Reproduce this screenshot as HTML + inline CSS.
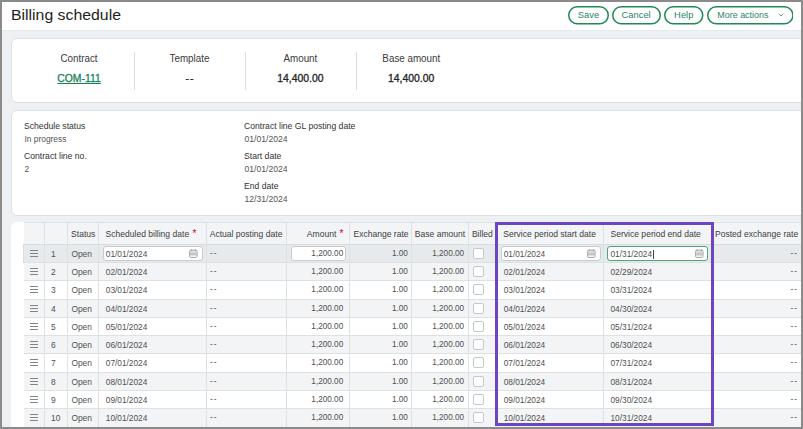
<!DOCTYPE html><html><head><meta charset="utf-8"><style>
*{box-sizing:border-box;margin:0;padding:0}
html,body{width:803px;height:429px;overflow:hidden;background:#edf1f3;font-family:"Liberation Sans",sans-serif;position:relative}
.a{position:absolute;white-space:nowrap}
.btn{position:absolute;top:6px;height:18.5px;border:1px solid #1c7f4e;box-shadow:inset 0 0 0 0.6px #1c7f4e;border-radius:10px;background:#fff}
.card{position:absolute;background:#fff;border:1px solid #dce1e4;border-radius:6px}
.dv{position:absolute;width:1px;background:#d9dde0}
.gv{position:absolute;width:1px;background:#dde2e5}
.inp{position:absolute;background:#fff;border:1px solid #c6ccd0;border-radius:3px}
</style></head><body>
<div class="a" style="left:0;top:0;width:803px;height:30px;background:#fff"></div>
<div class="a" style="left:0;top:30px;width:803px;height:1px;background:#e5eaec"></div>
<div class="a " style="top:8.30px;font-size:15px;line-height:14px;left:11.3px;color:#1e1e1e;transform:scaleX(1.055);transform-origin:0 0">Billing schedule</div>
<svg class="a" style="left:568px;top:6px" width="41.00" height="18.5" viewBox="0 0 41.00 18.5"><rect x="0.75" y="0.75" width="39.50" height="17" rx="8.5" fill="#fff" stroke="#1e8a55" stroke-width="1.5"/></svg>
<div class="a " style="top:8.34px;font-size:9.4px;line-height:14px;left:568px;width:41px;text-align:center;color:#2a8566;">Save</div>
<svg class="a" style="left:611.6px;top:6px" width="49.00" height="18.5" viewBox="0 0 49.00 18.5"><rect x="0.75" y="0.75" width="47.50" height="17" rx="8.5" fill="#fff" stroke="#1e8a55" stroke-width="1.5"/></svg>
<div class="a " style="top:8.34px;font-size:9.4px;line-height:14px;left:611.6px;width:49.0px;text-align:center;color:#2a8566;">Cancel</div>
<svg class="a" style="left:664px;top:6px" width="39.50" height="18.5" viewBox="0 0 39.50 18.5"><rect x="0.75" y="0.75" width="38.00" height="17" rx="8.5" fill="#fff" stroke="#1e8a55" stroke-width="1.5"/></svg>
<div class="a " style="top:8.34px;font-size:9.4px;line-height:14px;left:664px;width:39.5px;text-align:center;color:#2a8566;">Help</div>
<svg class="a" style="left:706.8px;top:6px" width="86.70" height="18.5" viewBox="0 0 86.70 18.5"><rect x="0.75" y="0.75" width="85.20" height="17" rx="8.5" fill="#fff" stroke="#1e8a55" stroke-width="1.5"/></svg>
<div class="a " style="top:7.90px;font-size:8.95px;line-height:14px;left:717.3px;color:#2a8566;">More actions</div>
<svg class="a" style="left:778px;top:13px" width="6" height="4" viewBox="0 0 6 4"><path d="M0.7 0.7 L3 3 L5.3 0.7" fill="none" stroke="#3b8a70" stroke-width="0.8"/></svg>
<div class="card" style="left:11px;top:38px;width:820px;height:64.5px"></div>
<div class="a " style="top:51.36px;font-size:10.5px;line-height:14px;left:24px;width:110px;text-align:center;color:#3a3a3a;transform:scaleX(0.935)">Contract</div>
<div class="a " style="top:72.40px;font-size:10.4px;line-height:14px;left:24px;width:110px;text-align:center;color:#1a8459;-webkit-text-stroke:0.3px #1a8459;text-decoration:underline;text-underline-offset:1.0px;text-decoration-thickness:1px">COM-111</div>
<div class="a " style="top:51.36px;font-size:10.5px;line-height:14px;left:134px;width:111px;text-align:center;color:#3a3a3a;transform:scaleX(0.935)">Template</div>
<div class="a " style="top:72.40px;font-size:10.4px;line-height:14px;left:134px;width:111px;text-align:center;color:#222;-webkit-text-stroke:0.3px #222;letter-spacing:0.9px;padding-left:0.9px">--</div>
<div class="a " style="top:51.36px;font-size:10.5px;line-height:14px;left:245px;width:110.80000000000001px;text-align:center;color:#3a3a3a;transform:scaleX(0.935)">Amount</div>
<div class="a " style="top:72.40px;font-size:10.4px;line-height:14px;left:245px;width:110.80000000000001px;text-align:center;color:#222;-webkit-text-stroke:0.3px #222">14,400.00</div>
<div class="a " style="top:51.36px;font-size:10.5px;line-height:14px;left:355.8px;width:110.59999999999997px;text-align:center;color:#3a3a3a;transform:scaleX(0.935)">Base amount</div>
<div class="a " style="top:72.40px;font-size:10.4px;line-height:14px;left:355.8px;width:110.59999999999997px;text-align:center;color:#222;-webkit-text-stroke:0.3px #222">14,400.00</div>
<div class="dv" style="left:134px;top:51.6px;height:38.4px"></div>
<div class="dv" style="left:245px;top:51.6px;height:38.4px"></div>
<div class="dv" style="left:355.8px;top:51.6px;height:38.4px"></div>
<div class="card" style="left:11px;top:110px;width:820px;height:105.5px"></div>
<div class="a " style="top:119.00px;font-size:8.65px;line-height:14px;left:24px;color:#333;">Schedule status</div>
<div class="a " style="top:132.39px;font-size:8.4px;line-height:14px;left:24.5px;color:#555;">In progress</div>
<div class="a " style="top:149.00px;font-size:8.65px;line-height:14px;left:24px;color:#333;">Contract line no.</div>
<div class="a " style="top:162.39px;font-size:8.4px;line-height:14px;left:24.5px;color:#555;">2</div>
<div class="a " style="top:119.00px;font-size:8.65px;line-height:14px;left:244px;color:#333;">Contract line GL posting date</div>
<div class="a " style="top:132.32px;font-size:8.6px;line-height:14px;left:244.5px;color:#555;">01/01/2024</div>
<div class="a " style="top:149.00px;font-size:8.65px;line-height:14px;left:244px;color:#333;">Start date</div>
<div class="a " style="top:162.32px;font-size:8.6px;line-height:14px;left:244.5px;color:#555;">01/01/2024</div>
<div class="a " style="top:179.00px;font-size:8.65px;line-height:14px;left:244px;color:#333;">End date</div>
<div class="a " style="top:192.32px;font-size:8.6px;line-height:14px;left:244.5px;color:#555;">12/31/2024</div>
<div class="a" style="left:11px;top:222px;width:820px;height:260px;background:#fff;border-radius:6px"></div>
<div class="a" style="left:24px;top:222px;width:790px;height:22px;background:#f2f4f6;border-top:1px solid #dde2e5"></div>
<div class="a" style="left:23px;top:244px;width:791px;height:19px;background:#e6eaed;border-top:1px solid #d6dcdf;border-left:1px solid #d6dcdf"></div>
<div class="a" style="left:24px;top:262px;width:790px;height:19px;background:#f2f4f5;border-top:1px solid #dce1e4"></div>
<div class="a" style="left:24px;top:280px;width:790px;height:20px;background:#ffffff;border-top:1px solid #dce1e4"></div>
<div class="a" style="left:24px;top:299px;width:790px;height:19px;background:#f2f4f5;border-top:1px solid #dce1e4"></div>
<div class="a" style="left:24px;top:317px;width:790px;height:19px;background:#ffffff;border-top:1px solid #dce1e4"></div>
<div class="a" style="left:24px;top:335px;width:790px;height:19px;background:#f2f4f5;border-top:1px solid #dce1e4"></div>
<div class="a" style="left:24px;top:353px;width:790px;height:20px;background:#ffffff;border-top:1px solid #dce1e4"></div>
<div class="a" style="left:24px;top:372px;width:790px;height:19px;background:#f2f4f5;border-top:1px solid #dce1e4"></div>
<div class="a" style="left:24px;top:390px;width:790px;height:19px;background:#ffffff;border-top:1px solid #dce1e4"></div>
<div class="a" style="left:24px;top:408px;width:790px;height:19px;background:#f2f4f5;border-top:1px solid #dce1e4"></div>
<div class="gv" style="left:44px;top:222px;height:210px"></div>
<div class="gv" style="left:67px;top:222px;height:210px"></div>
<div class="gv" style="left:98px;top:222px;height:210px"></div>
<div class="gv" style="left:206px;top:222px;height:210px"></div>
<div class="gv" style="left:286px;top:222px;height:210px"></div>
<div class="gv" style="left:349px;top:222px;height:210px"></div>
<div class="gv" style="left:411px;top:222px;height:210px"></div>
<div class="gv" style="left:468px;top:222px;height:210px"></div>
<div class="gv" style="left:496px;top:222px;height:210px"></div>
<div class="gv" style="left:603px;top:222px;height:210px"></div>
<div class="gv" style="left:712px;top:222px;height:210px"></div>
<div class="a " style="top:227.04px;font-size:8.55px;line-height:14px;left:71.1px;color:#404040;">Status</div>
<div class="a " style="top:227.04px;font-size:8.55px;line-height:14px;left:105.5px;color:#404040;">Scheduled billing date</div>
<div class="a " style="top:227.04px;font-size:8.55px;line-height:14px;left:209.7px;color:#404040;">Actual posting date</div>
<div class="a " style="top:227.04px;font-size:8.55px;line-height:14px;right:466.7px;color:#404040;">Amount</div>
<div class="a " style="top:227.04px;font-size:8.55px;line-height:14px;right:394.4px;color:#404040;">Exchange rate</div>
<div class="a " style="top:227.04px;font-size:8.55px;line-height:14px;right:337.8px;color:#404040;">Base amount</div>
<div class="a " style="top:227.04px;font-size:8.55px;line-height:14px;left:471.9px;color:#404040;">Billed</div>
<div class="a " style="top:227.04px;font-size:8.55px;line-height:14px;left:503.3px;color:#404040;">Service period start date</div>
<div class="a " style="top:227.04px;font-size:8.55px;line-height:14px;left:610.5px;color:#404040;">Service period end date</div>
<div class="a " style="top:227.04px;font-size:8.55px;line-height:14px;left:715px;color:#404040;">Posted exchange rate</div>
<div class="a " style="top:227.13px;font-size:10px;line-height:14px;left:192.6px;color:#d0021b;">*</div>
<div class="a " style="top:227.13px;font-size:10px;line-height:14px;left:339.5px;color:#d0021b;">*</div>
<div class="a" style="left:30px;top:250.00px;width:8px;height:1px;background:#858585"></div>
<div class="a" style="left:30px;top:252.90px;width:8px;height:1px;background:#858585"></div>
<div class="a" style="left:30px;top:255.80px;width:8px;height:1px;background:#858585"></div>
<div class="a " style="top:246.69px;font-size:8.4px;line-height:14px;left:51px;color:#505050;">1</div>
<div class="a " style="top:246.69px;font-size:8.4px;line-height:14px;left:71.4px;color:#505050;">Open</div>
<div class="inp" style="left:102.5px;top:246.4px;width:100px;height:14.5px"></div>
<div class="inp" style="left:290.6px;top:246.4px;width:55.5px;height:14.5px"></div>
<div class="inp" style="left:500.5px;top:246.4px;width:100px;height:14.5px"></div>
<div class="inp" style="left:607.3px;top:246.4px;width:100.4px;height:14.6px;border-color:#4ea47b"></div>
<svg class="a" style="left:189.3px;top:249.3px" width="9" height="9" viewBox="0 0 9 9"><rect x="0.5" y="1.1" width="7.6" height="7.4" rx="1.6" fill="#e0e0e0" stroke="#a0a0a0" stroke-width="0.9"/><rect x="1.2" y="3.6" width="6.2" height="3" fill="#c6c6c6"/><rect x="1.2" y="6.7" width="6.2" height="1.1" fill="#fbfbfb"/><rect x="1.7" y="0.4" width="0.8" height="1.3" fill="#8a8a8a"/><rect x="6.1" y="0.4" width="0.8" height="1.3" fill="#8a8a8a"/></svg>
<svg class="a" style="left:587.0px;top:249.3px" width="9" height="9" viewBox="0 0 9 9"><rect x="0.5" y="1.1" width="7.6" height="7.4" rx="1.6" fill="#e0e0e0" stroke="#a0a0a0" stroke-width="0.9"/><rect x="1.2" y="3.6" width="6.2" height="3" fill="#c6c6c6"/><rect x="1.2" y="6.7" width="6.2" height="1.1" fill="#fbfbfb"/><rect x="1.7" y="0.4" width="0.8" height="1.3" fill="#8a8a8a"/><rect x="6.1" y="0.4" width="0.8" height="1.3" fill="#8a8a8a"/></svg>
<svg class="a" style="left:694.8px;top:249.3px" width="9" height="9" viewBox="0 0 9 9"><rect x="0.5" y="1.1" width="7.6" height="7.4" rx="1.6" fill="#e0e0e0" stroke="#a0a0a0" stroke-width="0.9"/><rect x="1.2" y="3.6" width="6.2" height="3" fill="#c6c6c6"/><rect x="1.2" y="6.7" width="6.2" height="1.1" fill="#fbfbfb"/><rect x="1.7" y="0.4" width="0.8" height="1.3" fill="#8a8a8a"/><rect x="6.1" y="0.4" width="0.8" height="1.3" fill="#8a8a8a"/></svg>
<div class="a " style="top:246.72px;font-size:8.3px;line-height:14px;left:105.8px;color:#505050;">01/01/2024</div>
<div class="a " style="top:245.89px;font-size:8.4px;line-height:14px;left:210.1px;color:#505050;letter-spacing:0.9px">--</div>
<div class="a " style="top:246.76px;font-size:8.2px;line-height:14px;right:459.8px;color:#505050;">1,200.00</div>
<div class="a " style="top:246.76px;font-size:8.2px;line-height:14px;right:395.2px;color:#505050;">1.00</div>
<div class="a " style="top:246.76px;font-size:8.2px;line-height:14px;right:338.9px;color:#505050;">1,200.00</div>
<div class="a" style="left:473.4px;top:247.6px;width:11px;height:11px;background:#fff;border:1px solid #c3c9cd;border-radius:2px"></div>
<div class="a " style="top:246.72px;font-size:8.3px;line-height:14px;left:503.7px;color:#505050;">01/01/2024</div>
<div class="a " style="top:246.72px;font-size:8.3px;line-height:14px;left:610.5px;color:#505050;">01/31/2024</div>
<div class="a " style="top:245.89px;font-size:8.4px;line-height:14px;right:5.100000000000023px;color:#505050;letter-spacing:0.9px">--</div>
<div class="a" style="left:30px;top:268.00px;width:8px;height:1px;background:#858585"></div>
<div class="a" style="left:30px;top:270.90px;width:8px;height:1px;background:#858585"></div>
<div class="a" style="left:30px;top:273.80px;width:8px;height:1px;background:#858585"></div>
<div class="a " style="top:264.69px;font-size:8.4px;line-height:14px;left:51px;color:#505050;">2</div>
<div class="a " style="top:264.69px;font-size:8.4px;line-height:14px;left:71.4px;color:#505050;">Open</div>
<div class="a " style="top:264.72px;font-size:8.3px;line-height:14px;left:105.8px;color:#505050;">02/01/2024</div>
<div class="a " style="top:263.89px;font-size:8.4px;line-height:14px;left:210.1px;color:#505050;letter-spacing:0.9px">--</div>
<div class="a " style="top:264.76px;font-size:8.2px;line-height:14px;right:459.8px;color:#505050;">1,200.00</div>
<div class="a " style="top:264.76px;font-size:8.2px;line-height:14px;right:395.2px;color:#505050;">1.00</div>
<div class="a " style="top:264.76px;font-size:8.2px;line-height:14px;right:338.9px;color:#505050;">1,200.00</div>
<div class="a" style="left:473.4px;top:265.6px;width:11px;height:11px;background:#fff;border:1px solid #c3c9cd;border-radius:2px"></div>
<div class="a " style="top:264.72px;font-size:8.3px;line-height:14px;left:503.7px;color:#505050;">02/01/2024</div>
<div class="a " style="top:264.72px;font-size:8.3px;line-height:14px;left:610.5px;color:#505050;">02/29/2024</div>
<div class="a " style="top:263.89px;font-size:8.4px;line-height:14px;right:5.100000000000023px;color:#505050;letter-spacing:0.9px">--</div>
<div class="a" style="left:30px;top:286.00px;width:8px;height:1px;background:#858585"></div>
<div class="a" style="left:30px;top:288.90px;width:8px;height:1px;background:#858585"></div>
<div class="a" style="left:30px;top:291.80px;width:8px;height:1px;background:#858585"></div>
<div class="a " style="top:282.69px;font-size:8.4px;line-height:14px;left:51px;color:#505050;">3</div>
<div class="a " style="top:282.69px;font-size:8.4px;line-height:14px;left:71.4px;color:#505050;">Open</div>
<div class="a " style="top:282.72px;font-size:8.3px;line-height:14px;left:105.8px;color:#505050;">03/01/2024</div>
<div class="a " style="top:281.89px;font-size:8.4px;line-height:14px;left:210.1px;color:#505050;letter-spacing:0.9px">--</div>
<div class="a " style="top:282.76px;font-size:8.2px;line-height:14px;right:459.8px;color:#505050;">1,200.00</div>
<div class="a " style="top:282.76px;font-size:8.2px;line-height:14px;right:395.2px;color:#505050;">1.00</div>
<div class="a " style="top:282.76px;font-size:8.2px;line-height:14px;right:338.9px;color:#505050;">1,200.00</div>
<div class="a" style="left:473.4px;top:283.6px;width:11px;height:11px;background:#fff;border:1px solid #c3c9cd;border-radius:2px"></div>
<div class="a " style="top:282.72px;font-size:8.3px;line-height:14px;left:503.7px;color:#505050;">03/01/2024</div>
<div class="a " style="top:282.72px;font-size:8.3px;line-height:14px;left:610.5px;color:#505050;">03/31/2024</div>
<div class="a " style="top:281.89px;font-size:8.4px;line-height:14px;right:5.100000000000023px;color:#505050;letter-spacing:0.9px">--</div>
<div class="a" style="left:30px;top:305.00px;width:8px;height:1px;background:#858585"></div>
<div class="a" style="left:30px;top:307.90px;width:8px;height:1px;background:#858585"></div>
<div class="a" style="left:30px;top:310.80px;width:8px;height:1px;background:#858585"></div>
<div class="a " style="top:301.69px;font-size:8.4px;line-height:14px;left:51px;color:#505050;">4</div>
<div class="a " style="top:301.69px;font-size:8.4px;line-height:14px;left:71.4px;color:#505050;">Open</div>
<div class="a " style="top:301.72px;font-size:8.3px;line-height:14px;left:105.8px;color:#505050;">04/01/2024</div>
<div class="a " style="top:300.89px;font-size:8.4px;line-height:14px;left:210.1px;color:#505050;letter-spacing:0.9px">--</div>
<div class="a " style="top:301.76px;font-size:8.2px;line-height:14px;right:459.8px;color:#505050;">1,200.00</div>
<div class="a " style="top:301.76px;font-size:8.2px;line-height:14px;right:395.2px;color:#505050;">1.00</div>
<div class="a " style="top:301.76px;font-size:8.2px;line-height:14px;right:338.9px;color:#505050;">1,200.00</div>
<div class="a" style="left:473.4px;top:302.6px;width:11px;height:11px;background:#fff;border:1px solid #c3c9cd;border-radius:2px"></div>
<div class="a " style="top:301.72px;font-size:8.3px;line-height:14px;left:503.7px;color:#505050;">04/01/2024</div>
<div class="a " style="top:301.72px;font-size:8.3px;line-height:14px;left:610.5px;color:#505050;">04/30/2024</div>
<div class="a " style="top:300.89px;font-size:8.4px;line-height:14px;right:5.100000000000023px;color:#505050;letter-spacing:0.9px">--</div>
<div class="a" style="left:30px;top:323.00px;width:8px;height:1px;background:#858585"></div>
<div class="a" style="left:30px;top:325.90px;width:8px;height:1px;background:#858585"></div>
<div class="a" style="left:30px;top:328.80px;width:8px;height:1px;background:#858585"></div>
<div class="a " style="top:319.69px;font-size:8.4px;line-height:14px;left:51px;color:#505050;">5</div>
<div class="a " style="top:319.69px;font-size:8.4px;line-height:14px;left:71.4px;color:#505050;">Open</div>
<div class="a " style="top:319.72px;font-size:8.3px;line-height:14px;left:105.8px;color:#505050;">05/01/2024</div>
<div class="a " style="top:318.89px;font-size:8.4px;line-height:14px;left:210.1px;color:#505050;letter-spacing:0.9px">--</div>
<div class="a " style="top:319.76px;font-size:8.2px;line-height:14px;right:459.8px;color:#505050;">1,200.00</div>
<div class="a " style="top:319.76px;font-size:8.2px;line-height:14px;right:395.2px;color:#505050;">1.00</div>
<div class="a " style="top:319.76px;font-size:8.2px;line-height:14px;right:338.9px;color:#505050;">1,200.00</div>
<div class="a" style="left:473.4px;top:320.6px;width:11px;height:11px;background:#fff;border:1px solid #c3c9cd;border-radius:2px"></div>
<div class="a " style="top:319.72px;font-size:8.3px;line-height:14px;left:503.7px;color:#505050;">05/01/2024</div>
<div class="a " style="top:319.72px;font-size:8.3px;line-height:14px;left:610.5px;color:#505050;">05/31/2024</div>
<div class="a " style="top:318.89px;font-size:8.4px;line-height:14px;right:5.100000000000023px;color:#505050;letter-spacing:0.9px">--</div>
<div class="a" style="left:30px;top:341.00px;width:8px;height:1px;background:#858585"></div>
<div class="a" style="left:30px;top:343.90px;width:8px;height:1px;background:#858585"></div>
<div class="a" style="left:30px;top:346.80px;width:8px;height:1px;background:#858585"></div>
<div class="a " style="top:337.69px;font-size:8.4px;line-height:14px;left:51px;color:#505050;">6</div>
<div class="a " style="top:337.69px;font-size:8.4px;line-height:14px;left:71.4px;color:#505050;">Open</div>
<div class="a " style="top:337.72px;font-size:8.3px;line-height:14px;left:105.8px;color:#505050;">06/01/2024</div>
<div class="a " style="top:336.89px;font-size:8.4px;line-height:14px;left:210.1px;color:#505050;letter-spacing:0.9px">--</div>
<div class="a " style="top:337.76px;font-size:8.2px;line-height:14px;right:459.8px;color:#505050;">1,200.00</div>
<div class="a " style="top:337.76px;font-size:8.2px;line-height:14px;right:395.2px;color:#505050;">1.00</div>
<div class="a " style="top:337.76px;font-size:8.2px;line-height:14px;right:338.9px;color:#505050;">1,200.00</div>
<div class="a" style="left:473.4px;top:338.6px;width:11px;height:11px;background:#fff;border:1px solid #c3c9cd;border-radius:2px"></div>
<div class="a " style="top:337.72px;font-size:8.3px;line-height:14px;left:503.7px;color:#505050;">06/01/2024</div>
<div class="a " style="top:337.72px;font-size:8.3px;line-height:14px;left:610.5px;color:#505050;">06/30/2024</div>
<div class="a " style="top:336.89px;font-size:8.4px;line-height:14px;right:5.100000000000023px;color:#505050;letter-spacing:0.9px">--</div>
<div class="a" style="left:30px;top:359.00px;width:8px;height:1px;background:#858585"></div>
<div class="a" style="left:30px;top:361.90px;width:8px;height:1px;background:#858585"></div>
<div class="a" style="left:30px;top:364.80px;width:8px;height:1px;background:#858585"></div>
<div class="a " style="top:355.69px;font-size:8.4px;line-height:14px;left:51px;color:#505050;">7</div>
<div class="a " style="top:355.69px;font-size:8.4px;line-height:14px;left:71.4px;color:#505050;">Open</div>
<div class="a " style="top:355.72px;font-size:8.3px;line-height:14px;left:105.8px;color:#505050;">07/01/2024</div>
<div class="a " style="top:354.89px;font-size:8.4px;line-height:14px;left:210.1px;color:#505050;letter-spacing:0.9px">--</div>
<div class="a " style="top:355.76px;font-size:8.2px;line-height:14px;right:459.8px;color:#505050;">1,200.00</div>
<div class="a " style="top:355.76px;font-size:8.2px;line-height:14px;right:395.2px;color:#505050;">1.00</div>
<div class="a " style="top:355.76px;font-size:8.2px;line-height:14px;right:338.9px;color:#505050;">1,200.00</div>
<div class="a" style="left:473.4px;top:356.6px;width:11px;height:11px;background:#fff;border:1px solid #c3c9cd;border-radius:2px"></div>
<div class="a " style="top:355.72px;font-size:8.3px;line-height:14px;left:503.7px;color:#505050;">07/01/2024</div>
<div class="a " style="top:355.72px;font-size:8.3px;line-height:14px;left:610.5px;color:#505050;">07/31/2024</div>
<div class="a " style="top:354.89px;font-size:8.4px;line-height:14px;right:5.100000000000023px;color:#505050;letter-spacing:0.9px">--</div>
<div class="a" style="left:30px;top:378.00px;width:8px;height:1px;background:#858585"></div>
<div class="a" style="left:30px;top:380.90px;width:8px;height:1px;background:#858585"></div>
<div class="a" style="left:30px;top:383.80px;width:8px;height:1px;background:#858585"></div>
<div class="a " style="top:374.69px;font-size:8.4px;line-height:14px;left:51px;color:#505050;">8</div>
<div class="a " style="top:374.69px;font-size:8.4px;line-height:14px;left:71.4px;color:#505050;">Open</div>
<div class="a " style="top:374.72px;font-size:8.3px;line-height:14px;left:105.8px;color:#505050;">08/01/2024</div>
<div class="a " style="top:373.89px;font-size:8.4px;line-height:14px;left:210.1px;color:#505050;letter-spacing:0.9px">--</div>
<div class="a " style="top:374.76px;font-size:8.2px;line-height:14px;right:459.8px;color:#505050;">1,200.00</div>
<div class="a " style="top:374.76px;font-size:8.2px;line-height:14px;right:395.2px;color:#505050;">1.00</div>
<div class="a " style="top:374.76px;font-size:8.2px;line-height:14px;right:338.9px;color:#505050;">1,200.00</div>
<div class="a" style="left:473.4px;top:375.6px;width:11px;height:11px;background:#fff;border:1px solid #c3c9cd;border-radius:2px"></div>
<div class="a " style="top:374.72px;font-size:8.3px;line-height:14px;left:503.7px;color:#505050;">08/01/2024</div>
<div class="a " style="top:374.72px;font-size:8.3px;line-height:14px;left:610.5px;color:#505050;">08/31/2024</div>
<div class="a " style="top:373.89px;font-size:8.4px;line-height:14px;right:5.100000000000023px;color:#505050;letter-spacing:0.9px">--</div>
<div class="a" style="left:30px;top:396.00px;width:8px;height:1px;background:#858585"></div>
<div class="a" style="left:30px;top:398.90px;width:8px;height:1px;background:#858585"></div>
<div class="a" style="left:30px;top:401.80px;width:8px;height:1px;background:#858585"></div>
<div class="a " style="top:392.69px;font-size:8.4px;line-height:14px;left:51px;color:#505050;">9</div>
<div class="a " style="top:392.69px;font-size:8.4px;line-height:14px;left:71.4px;color:#505050;">Open</div>
<div class="a " style="top:392.72px;font-size:8.3px;line-height:14px;left:105.8px;color:#505050;">09/01/2024</div>
<div class="a " style="top:391.89px;font-size:8.4px;line-height:14px;left:210.1px;color:#505050;letter-spacing:0.9px">--</div>
<div class="a " style="top:392.76px;font-size:8.2px;line-height:14px;right:459.8px;color:#505050;">1,200.00</div>
<div class="a " style="top:392.76px;font-size:8.2px;line-height:14px;right:395.2px;color:#505050;">1.00</div>
<div class="a " style="top:392.76px;font-size:8.2px;line-height:14px;right:338.9px;color:#505050;">1,200.00</div>
<div class="a" style="left:473.4px;top:393.6px;width:11px;height:11px;background:#fff;border:1px solid #c3c9cd;border-radius:2px"></div>
<div class="a " style="top:392.72px;font-size:8.3px;line-height:14px;left:503.7px;color:#505050;">09/01/2024</div>
<div class="a " style="top:392.72px;font-size:8.3px;line-height:14px;left:610.5px;color:#505050;">09/30/2024</div>
<div class="a " style="top:391.89px;font-size:8.4px;line-height:14px;right:5.100000000000023px;color:#505050;letter-spacing:0.9px">--</div>
<div class="a" style="left:30px;top:414.00px;width:8px;height:1px;background:#858585"></div>
<div class="a" style="left:30px;top:416.90px;width:8px;height:1px;background:#858585"></div>
<div class="a" style="left:30px;top:419.80px;width:8px;height:1px;background:#858585"></div>
<div class="a " style="top:410.69px;font-size:8.4px;line-height:14px;left:51px;color:#505050;">10</div>
<div class="a " style="top:410.69px;font-size:8.4px;line-height:14px;left:71.4px;color:#505050;">Open</div>
<div class="a " style="top:410.72px;font-size:8.3px;line-height:14px;left:105.8px;color:#505050;">10/01/2024</div>
<div class="a " style="top:409.89px;font-size:8.4px;line-height:14px;left:210.1px;color:#505050;letter-spacing:0.9px">--</div>
<div class="a " style="top:410.76px;font-size:8.2px;line-height:14px;right:459.8px;color:#505050;">1,200.00</div>
<div class="a " style="top:410.76px;font-size:8.2px;line-height:14px;right:395.2px;color:#505050;">1.00</div>
<div class="a " style="top:410.76px;font-size:8.2px;line-height:14px;right:338.9px;color:#505050;">1,200.00</div>
<div class="a" style="left:473.4px;top:411.6px;width:11px;height:11px;background:#fff;border:1px solid #c3c9cd;border-radius:2px"></div>
<div class="a " style="top:410.72px;font-size:8.3px;line-height:14px;left:503.7px;color:#505050;">10/01/2024</div>
<div class="a " style="top:410.72px;font-size:8.3px;line-height:14px;left:610.5px;color:#505050;">10/31/2024</div>
<div class="a " style="top:409.89px;font-size:8.4px;line-height:14px;right:5.100000000000023px;color:#505050;letter-spacing:0.9px">--</div>
<div class="a" style="left:653.4px;top:249.5px;width:1px;height:9px;background:#444"></div>
<div class="a" style="left:495px;top:222px;width:219px;height:203.5px;border:3px solid #6b45c2"></div>
<div class="a" style="left:0;top:0;width:803px;height:2px;background:#8b8b8b"></div>
<div class="a" style="left:0;top:427px;width:803px;height:2px;background:#8b8b8b"></div>
<div class="a" style="left:0;top:0;width:2px;height:429px;background:#8b8b8b"></div>
<div class="a" style="left:801px;top:0;width:2px;height:429px;background:#8b8b8b"></div>
</body></html>
